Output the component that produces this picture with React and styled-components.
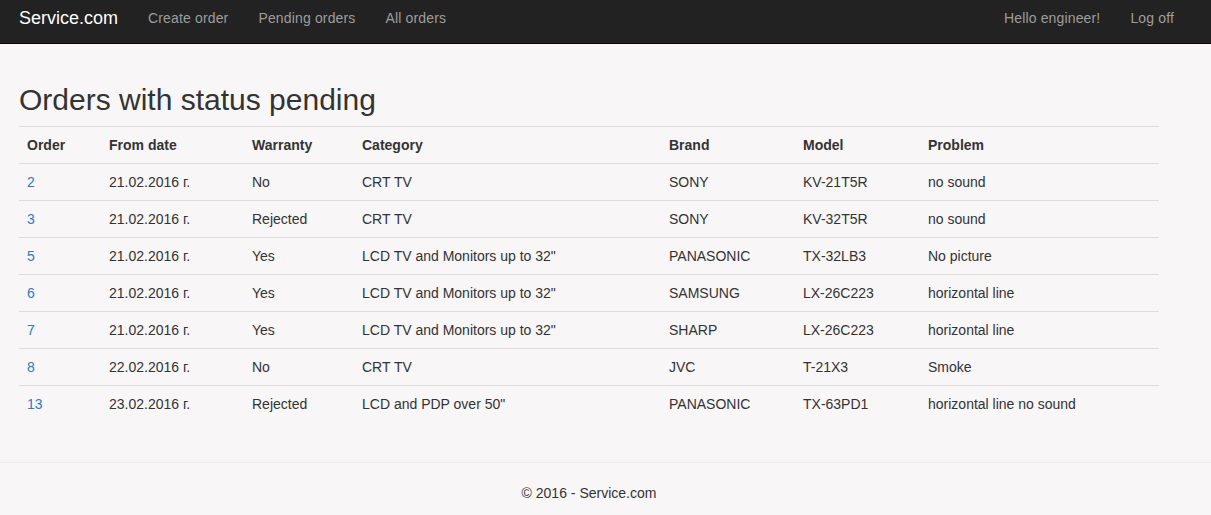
import styled, { createGlobalStyle } from 'styled-components';

const GlobalStyle = createGlobalStyle`
  html, body {
    margin: 0;
    padding: 0;
    background: #f8f6f7;
    font-family: "Liberation Sans", Arial, Helvetica, sans-serif;
    font-size: 14px;
    line-height: 20px;
    color: #333;
  }
  * { box-sizing: border-box; }
`

const Navbar = styled.nav`
    height: 44px;
    background: #222;
    border-bottom: 1px solid #080808;
    display: flex;
    align-items: flex-start;
    justify-content: space-between;
    padding: 0 22px 0 4px;
`
const NavGroup = styled.div`
    display: flex;
    align-items: flex-start;
`
const Brand = styled.a`
    color: #fff;
    font-size: 18px;
    line-height: 20px;
    padding: 8px 15px;
    text-decoration: none;
`
const NavLink = styled.a`
    color: #9d9d9d;
    font-size: 14px;
    line-height: 20px;
    padding: 8px 15px;
    letter-spacing: 0.15px;
    text-decoration: none;
`

const Body = styled.main`
    padding: 19px 0 20px 19px;
    width: 1159px;
`
const Title = styled.h2`
    font-size: 30px;
    font-weight: 500;
    line-height: 33px;
    margin: 20px 0 10px;
`
const Table = styled.table`
    width: 1140px;
    border-collapse: collapse;
    table-layout: fixed;
    margin-bottom: 20px;
`
const Th = styled.th`
    text-align: left;
    font-weight: bold;
    padding: 8px;
    border-top: 1px solid #ddd;
    border-bottom: 1px solid #ddd;
`
const Td = styled.td`
    padding: 8px;
    border-top: ${p => (p.$first ? 'none' : '1px solid #ddd')};
    white-space: nowrap;
`
const OrderLink = styled.a`
    color: #337ab7;
    text-decoration: none;
`
const Rule = styled.hr`
    border: 0;
    border-top: 1px solid #eee;
    margin: 0;
`
const Footer = styled.footer`
    width: 1178px;
    text-align: center;
    padding: 20px 0 12px;
`

const widths = [82, 143, 110, 307, 134, 125, 239]
const headers = ['Order', 'From date', 'Warranty', 'Category', 'Brand', 'Model', 'Problem']

const orders = [
    [2, '21.02.2016 г.', 'No', 'CRT TV', 'SONY', 'KV-21T5R', 'no sound'],
    [3, '21.02.2016 г.', 'Rejected', 'CRT TV', 'SONY', 'KV-32T5R', 'no sound'],
    [5, '21.02.2016 г.', 'Yes', 'LCD TV and Monitors up to 32"', 'PANASONIC', 'TX-32LB3', 'No picture'],
    [6, '21.02.2016 г.', 'Yes', 'LCD TV and Monitors up to 32"', 'SAMSUNG', 'LX-26C223', 'horizontal line'],
    [7, '21.02.2016 г.', 'Yes', 'LCD TV and Monitors up to 32"', 'SHARP', 'LX-26C223', 'horizontal line'],
    [8, '22.02.2016 г.', 'No', 'CRT TV', 'JVC', 'T-21X3', 'Smoke'],
    [13, '23.02.2016 г.', 'Rejected', 'LCD and PDP over 50"', 'PANASONIC', 'TX-63PD1', 'horizontal line no sound'],
]

export default function App() {
    return (
        <>
            <GlobalStyle />
            <Navbar>
                <NavGroup>
                    <Brand href="#">Service.com</Brand>
                    <NavLink href="#">Create order</NavLink>
                    <NavLink href="#">Pending orders</NavLink>
                    <NavLink href="#">All orders</NavLink>
                </NavGroup>
                <NavGroup>
                    <NavLink href="#">Hello engineer!</NavLink>
                    <NavLink href="#">Log off</NavLink>
                </NavGroup>
            </Navbar>
            <Body>
                <Title>Orders with status pending</Title>
                <Table>
                    <colgroup>
                        {widths.map((w, i) => <col key={i} style={{ width: w }} />)}
                    </colgroup>
                    <thead>
                        <tr>
                            {headers.map(h => <Th key={h}>{h}</Th>)}
                        </tr>
                    </thead>
                    <tbody>
                        {orders.map((row, r) => (
                            <tr key={row[0]}>
                                <Td $first={r === 0}><OrderLink href="#">{row[0]}</OrderLink></Td>
                                {row.slice(1).map((cell, i) => (
                                    <Td key={i} $first={r === 0}>{cell}</Td>
                                ))}
                            </tr>
                        ))}
                    </tbody>
                </Table>
            </Body>
            <Rule />
            <Footer>© 2016 - Service.com</Footer>
        </>
    );
}
